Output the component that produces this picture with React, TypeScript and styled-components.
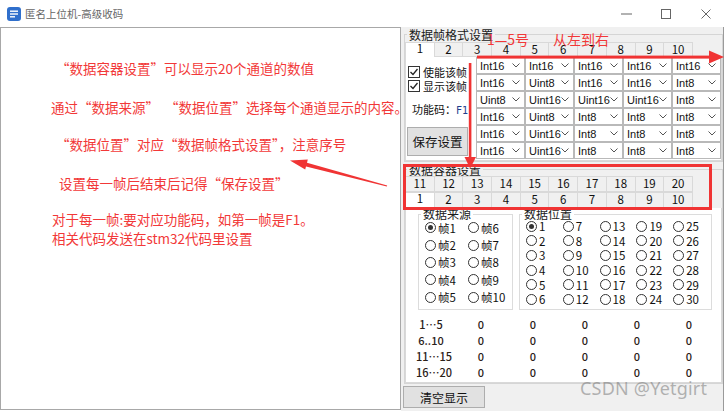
import React from "react";
import styled, { createGlobalStyle } from "styled-components";

const FONT = `"Noto Sans CJK SC", "Microsoft YaHei", sans-serif`;
const RED = "#f23838";

const GlobalStyle = createGlobalStyle`
    html, body {
        margin: 0;
        padding: 0;
        background: #ffffff;
    }
    body {
        width: 726px;
        height: 411px;
        overflow: hidden;
        font-family: ${FONT};
    }
    * {
        box-sizing: border-box;
    }
`;

const Window = styled.div`
    position: relative;
    width: 726px;
    height: 411px;
    display: flex;
    flex-direction: column;
    background: #ffffff;
`;

const TitleBar = styled.div`
    height: 27px;
    display: flex;
    align-items: center;
    padding-left: 7px;
`;

const Title = styled.span`
    margin-left: 4px;
    font-size: 10.5px;
    line-height: 14px;
    color: #666666;
`;

const Controls = styled.div`
    margin-left: auto;
    display: flex;
`;

const ControlButton = styled.div`
    width: 40px;
    height: 27px;
    display: flex;
    align-items: center;
    justify-content: center;
`;

const Main = styled.div`
    height: 384px;
    display: flex;
    align-items: flex-start;
`;

const OutputBox = styled.div`
    width: 401px;
    height: 383px;
    flex-shrink: 0;
    border: 1px solid #a8a8a8;
    background: #ffffff;
    display: flex;
    flex-direction: column;
`;

const Note = styled.div<{ $top: number; $indent: number }>`
    margin-top: ${(p) => p.$top}px;
    padding-left: ${(p) => p.$indent}px;
    font-size: 13.5px;
    line-height: 18px;
    color: ${RED};
    white-space: pre;
`;

const SidePanel = styled.div`
    width: 323px;
    height: 384px;
    flex-shrink: 0;
    background: #f0f0f0;
    border-right: 1px solid #9a9a9a;
    padding-left: 3px;
    display: flex;
    flex-direction: column;
`;

const Group = styled.fieldset<{ $gap?: number }>`
    margin: ${(p) => p.$gap ?? 0}px 0 0 0;
    padding: 0;
    min-width: 0;
    border: 1px solid #d5d5d5;
    display: flex;
    flex-direction: column;
`;

const GroupLabel = styled.legend<{ $lh: number }>`
    margin-left: 2px;
    padding: 0 2px;
    font-size: 12px;
    line-height: ${(p) => p.$lh}px;
    color: #1a1a1a;
`;

const TabRow = styled.div<{ $h: number }>`
    height: ${(p) => p.$h}px;
    display: flex;
    align-items: flex-end;
`;

const Tab = styled.div<{ $active?: boolean }>`
    width: 29.7px;
    flex-shrink: 0;
    height: 100%;
    margin-left: ${(p) => (p.$active ? 0 : -1)}px;
    border: 1px solid #d9d9d9;
    border-bottom: ${(p) => (p.$active ? "none" : "1px solid #d9d9d9")};
    background: ${(p) => (p.$active ? "#ffffff" : "#f0f0f0")};
    font-size: 11.5px;
    line-height: ${(p) => (p.$active ? 11 : 13)}px;
    text-align: center;
    color: #111111;
    &:first-child {
        margin-left: 0;
    }
`;

const TabPage = styled.div<{ $h: number }>`
    height: ${(p) => p.$h}px;
    background: #ffffff;
    border: 1px solid #d9d9d9;
    border-top: none;
`;

const FramePage = styled(TabPage)`
    display: flex;
    gap: 6px;
`;

const FrameSide = styled.div`
    width: 64px;
    flex-shrink: 0;
    display: flex;
    flex-direction: column;
    padding-top: 8px;
    padding-left: 2px;
    white-space: nowrap;
`;

const CheckRow = styled.label`
    height: 14px;
    display: flex;
    align-items: center;
    gap: 3px;
    font-size: 11px;
    color: #111111;
`;

const CheckBox = styled.span`
    width: 12px;
    height: 12px;
    flex-shrink: 0;
    border: 1px solid #333333;
    background: #ffffff;
    display: flex;
    align-items: center;
    justify-content: center;
`;

const FuncCode = styled.div`
    margin-top: 9px;
    padding-left: 4px;
    height: 14px;
    font-size: 11px;
    line-height: 14px;
    color: #111111;
    span {
        font-family: "DejaVu Sans Mono", monospace;
        font-size: 10px;
        color: #1e3c8c;
    }
`;

const Button = styled.div<{ $w: number; $h: number }>`
    width: ${(p) => p.$w}px;
    height: ${(p) => p.$h}px;
    flex-shrink: 0;
    background: #e1e1e1;
    border: 1px solid #adadad;
    display: flex;
    align-items: center;
    justify-content: center;
    font-size: 12px;
    color: #111111;
`;

const SaveButton = styled(Button)`
    margin-top: 11px;
    margin-left: -1px;
    font-size: 12.5px;
`;

const ClearButton = styled(Button)`
    margin-top: 2px;
    margin-left: -1px;
`;

const TypeGrid = styled.div`
    display: grid;
    grid-template-columns: repeat(5, 49px);
    grid-auto-rows: 17px;
    flex-shrink: 0;
`;

const Combo = styled.div`
    border: 1px solid #b9b9b9;
    background: #ffffff;
    display: flex;
    align-items: center;
    justify-content: space-between;
    padding: 0 4px 0 3px;
    font-family: "Liberation Sans", Arial, sans-serif;
    font-size: 11px;
    color: #111111;
    white-space: nowrap;
    overflow: hidden;
`;

const ContainerPage = styled(TabPage)`
    display: flex;
    flex-direction: column;
    padding-left: 12px;
`;

const Pickers = styled.div`
    margin-top: 1px;
    display: flex;
    gap: 6px;
`;

const PickerGroup = styled(Group)<{ $w: number }>`
    width: ${(p) => p.$w}px;
    border-color: #dcdcdc;
`;

const RadioGrid = styled.div<{ $cols: number; $colW: number; $rowH: number; $rows: number }>`
    display: grid;
    grid-template-columns: repeat(${(p) => p.$cols}, ${(p) => p.$colW}px);
    grid-template-rows: repeat(${(p) => p.$rows}, ${(p) => p.$rowH}px);
    grid-auto-flow: column;
    padding: 0 0 2px 6px;
`;

const RadioItem = styled.div`
    display: flex;
    align-items: center;
    gap: 2px;
    font-size: 11.5px;
    color: #111111;
    white-space: nowrap;
`;

const RadioDot = styled.span<{ $on?: boolean }>`
    width: 11px;
    height: 11px;
    flex-shrink: 0;
    border-radius: 50%;
    border: 1px solid #333333;
    display: flex;
    align-items: center;
    justify-content: center;
    &::after {
        content: "";
        width: 5px;
        height: 5px;
        border-radius: 50%;
        background: ${(p) => (p.$on ? "#333333" : "transparent")};
    }
`;

const ValueTable = styled.div`
    margin-top: 6px;
    display: grid;
    grid-template-columns: 37px repeat(5, 52px);
    grid-auto-rows: 16px;
    align-items: center;
    font-size: 11px;
    font-weight: 500;
    color: #2b2118;
`;

const ValueLabel = styled.span`
    width: 30px;
    margin-left: -2px;
    text-align: center;
    white-space: nowrap;
`;

const Value = styled.span`
    text-align: center;
`;

const Overlay = styled.svg`
    position: absolute;
    left: 0;
    top: 0;
    pointer-events: none;
`;

const Callout = styled.span<{ $x: number; $y: number }>`
    position: absolute;
    left: ${(p) => p.$x}px;
    top: ${(p) => p.$y}px;
    font-size: 14px;
    line-height: 16px;
    color: ${RED};
`;

const Watermark = styled.span`
    position: absolute;
    left: 580px;
    top: 377px;
    font-family: "Noto Sans", "Open Sans", sans-serif;
    font-size: 18px;
    line-height: 22px;
    color: rgba(110, 110, 110, 0.5);
    letter-spacing: 0.2px;
`;

const Chevron = () => (
    <svg width="8" height="5" viewBox="0 0 8 5">
        <polyline points="0.5,0.5 4,4 7.5,0.5" fill="none" stroke="#555" strokeWidth="1" />
    </svg>
);

const Check = () => (
    <svg width="10" height="10" viewBox="0 0 10 10">
        <polyline points="1.5,5 4,7.5 8.5,2" fill="none" stroke="#222" strokeWidth="1.3" />
    </svg>
);

const AppIcon = () => (
    <svg width="14" height="14" viewBox="0 0 14 14">
        <rect x="0" y="0" width="14" height="14" rx="3" fill="#2f6fcc" />
        <rect x="3" y="3.5" width="8" height="1.4" fill="#fff" />
        <rect x="3" y="6.3" width="8" height="1.4" fill="#fff" />
        <rect x="3" y="9.1" width="5" height="1.4" fill="#fff" />
    </svg>
);

const types = [
    ["Int16", "Int16", "Int16", "Int16", "Int16"],
    ["Int16", "Uint8", "Int16", "Int16", "Int8"],
    ["Uint8", "Uint16", "Uint16", "Uint16", "Int8"],
    ["Int16", "Uint8", "Int8", "Int8", "Int8"],
    ["Int16", "Uint16", "Int8", "Int8", "Int8"],
    ["Int16", "Uint16", "Int8", "Int8", "Int8"],
];

const notes = [
    { top: 31, indent: 55, text: "“数据容器设置”可以显示20个通道的数值" },
    { top: 21, indent: 50, text: "通过“数据来源”  “数据位置”选择每个通道显示的内容。" },
    { top: 19, indent: 55, text: "“数据位置”对应“数据帧格式设置”，注意序号" },
    { top: 21, indent: 58, text: "设置每一帧后结束后记得“保存设置”" },
    { top: 18, indent: 51, text: "对于每一帧:要对应功能码，如第一帧是F1。" },
    { top: 1, indent: 51, text: "相关代码发送在stm32代码里设置" },
];

const range = (from: number, to: number) =>
    Array.from({ length: to - from + 1 }, (_, i) => from + i);

const FrameFormat: React.FC = () => (
    <Group>
        <GroupLabel $lh={15}>数据帧格式设置</GroupLabel>
        <TabRow $h={15}>
            {range(1, 10).map((n) => (
                <Tab key={n} $active={n === 1}>
                    {n}
                </Tab>
            ))}
        </TabRow>
        <FramePage $h={104}>
            <FrameSide>
                <CheckRow>
                    <CheckBox>
                        <Check />
                    </CheckBox>
                    使能该帧
                </CheckRow>
                <CheckRow>
                    <CheckBox>
                        <Check />
                    </CheckBox>
                    显示该帧
                </CheckRow>
                <FuncCode>
                    功能码：<span>F1</span>
                </FuncCode>
                <SaveButton $w={61} $h={29}>
                    保存设置
                </SaveButton>
            </FrameSide>
            <TypeGrid>
                {types.flat().map((t, i) => (
                    <Combo key={i}>
                        {t}
                        <Chevron />
                    </Combo>
                ))}
            </TypeGrid>
        </FramePage>
    </Group>
);

const ContainerSettings: React.FC = () => (
    <Group $gap={1}>
        <GroupLabel $lh={13}>数据容器设置</GroupLabel>
        <TabRow $h={16}>
            {range(11, 20).map((n) => (
                <Tab key={n}>{n}</Tab>
            ))}
        </TabRow>
        <TabRow $h={16}>
            {range(1, 10).map((n) => (
                <Tab key={n} $active={n === 1}>
                    {n}
                </Tab>
            ))}
        </TabRow>
        <ContainerPage $h={175}>
            <Pickers>
                <PickerGroup $w={95}>
                    <GroupLabel $lh={10}>数据来源</GroupLabel>
                    <RadioGrid $cols={2} $colW={43} $rows={5} $rowH={17.4}>
                        {range(1, 10).map((n) => (
                            <RadioItem key={n}>
                                <RadioDot $on={n === 1} />
                                帧{n}
                            </RadioItem>
                        ))}
                    </RadioGrid>
                </PickerGroup>
                <PickerGroup $w={193}>
                    <GroupLabel $lh={10}>数据位置</GroupLabel>
                    <RadioGrid $cols={5} $colW={36.8} $rows={6} $rowH={14.6}>
                        {range(1, 30).map((n) => (
                            <RadioItem key={n}>
                                <RadioDot $on={n === 1} />
                                {n}
                            </RadioItem>
                        ))}
                    </RadioGrid>
                </PickerGroup>
            </Pickers>
            <ValueTable>
                {["1…5", "6..10", "11…15", "16…20"].map((label) => (
                    <React.Fragment key={label}>
                        <ValueLabel>{label}</ValueLabel>
                        {range(1, 5).map((k) => (
                            <Value key={k}>0</Value>
                        ))}
                    </React.Fragment>
                ))}
            </ValueTable>
        </ContainerPage>
    </Group>
);

const Annotations: React.FC = () => (
    <>
        <Overlay width="726" height="411" viewBox="0 0 726 411">
            <polygon
                points="290,160.5 307.8,159.6 307,162.7 387.2,185.4 386.8,186.6 306,166.5 305.2,169.6"
                fill="#f03434"
            />
            <rect x="477" y="55.6" width="236" height="3" fill="#f03434" />
            <polygon points="709,50.5 724,57 709,63.5" fill="#f03434" />
            <rect x="468.8" y="63" width="2.6" height="96" fill="#f03434" />
            <polygon points="464.5,157 476,157 470.2,168.5" fill="#f03434" />
            <rect x="404.5" y="165.5" width="306" height="43" fill="none" stroke="#f03434" strokeWidth="3" />
        </Overlay>
        <Callout $x={487} $y={31}>
            1—5号
        </Callout>
        <Callout $x={553} $y={31}>
            从左到右
        </Callout>
        <Watermark>CSDN @Yetgirt</Watermark>
    </>
);

const App: React.FC = () => (
    <Window>
        <GlobalStyle />
        <TitleBar>
            <AppIcon />
            <Title>匿名上位机-高级收码</Title>
            <Controls>
                <ControlButton>
                    <svg width="11" height="2" viewBox="0 0 11 2">
                        <rect x="0" y="0.5" width="11" height="1" fill="#666" />
                    </svg>
                </ControlButton>
                <ControlButton>
                    <svg width="10" height="10" viewBox="0 0 10 10">
                        <rect x="0.5" y="0.5" width="9" height="9" fill="none" stroke="#666" />
                    </svg>
                </ControlButton>
                <ControlButton>
                    <svg width="10" height="10" viewBox="0 0 10 10">
                        <path d="M0.5 0.5 L9.5 9.5 M9.5 0.5 L0.5 9.5" stroke="#666" />
                    </svg>
                </ControlButton>
            </Controls>
        </TitleBar>
        <Main>
            <OutputBox>
                {notes.map((n) => (
                    <Note key={n.text} $top={n.top} $indent={n.indent}>
                        {n.text}
                    </Note>
                ))}
            </OutputBox>
            <SidePanel>
                <FrameFormat />
                <ContainerSettings />
                <ClearButton $w={82} $h={22}>
                    清空显示
                </ClearButton>
            </SidePanel>
        </Main>
        <Annotations />
    </Window>
);

export default App;
